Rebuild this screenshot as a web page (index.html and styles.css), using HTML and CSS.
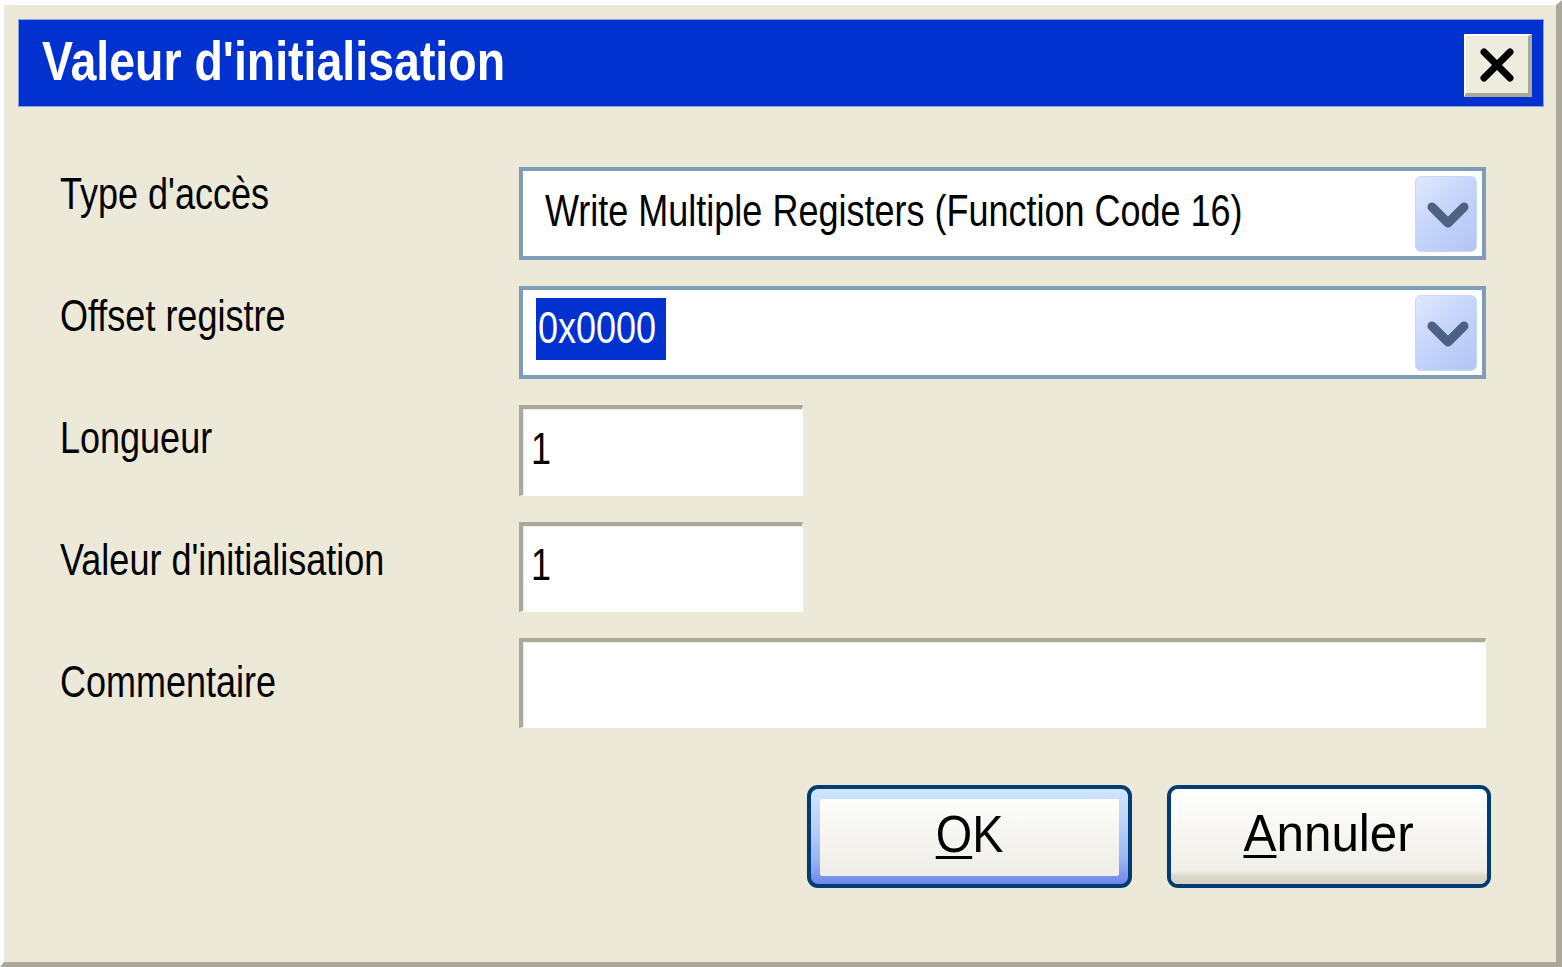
FILE: index.html
```html
<!DOCTYPE html>
<html lang="fr">
<head>
<meta charset="utf-8">
<title>Valeur d'initialisation</title>
<link rel="stylesheet" href="styles.css">
</head>
<body>
<div class="window">
  <div class="titlebar">
    <div class="title"><span class="sx-title">Valeur d'initialisation</span></div>
    <div class="close">
      <svg width="36" height="36" viewBox="0 0 36 36"><path d="M5 5 L31 31 M31 5 L5 31" stroke="#000" stroke-width="7" stroke-linecap="round" fill="none"/></svg>
    </div>
  </div>
  <div class="form">
    <div class="labels">
      <div class="label"><span class="sx">Type d'accès</span></div>
      <div class="label"><span class="sx">Offset registre</span></div>
      <div class="label"><span class="sx">Longueur</span></div>
      <div class="label"><span class="sx">Valeur d'initialisation</span></div>
      <div class="label"><span class="sx">Commentaire</span></div>
    </div>
    <div class="fields">
      <div class="combo">
        <div class="combo-text"><span class="sx">Write Multiple Registers (Function Code 16)</span></div>
        <div class="drop"><svg width="60" height="74" viewBox="0 0 60 74"><path d="M16 30 L32 46 L48 30" stroke="#4d6185" stroke-width="9" stroke-linecap="round" stroke-linejoin="round" fill="none"/></svg></div>
      </div>
      <div class="combo">
        <div class="combo-text edit"><div class="sel"><span class="sx">0x0000</span></div></div>
        <div class="drop"><svg width="60" height="74" viewBox="0 0 60 74"><path d="M16 30 L32 46 L48 30" stroke="#4d6185" stroke-width="9" stroke-linecap="round" stroke-linejoin="round" fill="none"/></svg></div>
      </div>
      <div class="input short h91"><span class="sx">1</span></div>
      <div class="input short"><span class="sx">1</span></div>
      <div class="input long"></div>
    </div>
  </div>
  <div class="buttons">
    <div class="btn default"><div class="face"><span class="sxb"><u>O</u>K</span></div></div>
    <div class="btn"><div class="face"><span class="sxb wide"><u>A</u>nnuler</span></div></div>
  </div>
</div>
</body>
</html>
```
FILE: styles.css
```css
html, body {
  margin: 0;
  padding: 0;
  background: #ece9d8;
  font-family: "Liberation Sans", Arial, sans-serif;
  color: #000;
}

.window {
  width: 1562px;
  height: 967px;
  box-sizing: border-box;
  background: #ece9d8;
  border-top: 5px solid #fff;
  border-left: 4px solid #fff;
  border-right: 6px solid #aca899;
  border-bottom: 5px solid #aca899;
  padding: 14px 12px 0 14px;
}

.titlebar {
  height: 88px;
  box-sizing: border-box;
  border: 1px solid #8d9fdc;
  background: #0131cf;
  display: flex;
  justify-content: space-between;
  align-items: flex-start;
  padding: 0 11px 0 23px;
}

.title {
  color: #fff;
  font-weight: bold;
  font-size: 56px;
  line-height: 64px;
  margin-top: 9px;
  white-space: nowrap;
}

.sx-title {
  display: inline-block;
  transform: scaleX(0.83);
  transform-origin: 0 50%;
}

.close {
  width: 68px;
  height: 63px;
  box-sizing: border-box;
  margin-top: 14px;
  background: #eeebdf;
  border-top: 2px solid #fff;
  border-left: 2px solid #fff;
  border-right: 4px solid #aca899;
  border-bottom: 4px solid #aca899;
  display: flex;
  align-items: center;
  justify-content: center;
}

.close svg { display: block; }

.form {
  display: flex;
  margin-top: 60px;
  padding-left: 42px;
}

.labels {
  width: 459px;
  padding-top: 2px;
  display: flex;
  flex-direction: column;
  gap: 72px;
}

.label {
  font-size: 45px;
  line-height: 50px;
  white-space: nowrap;
}

.sx {
  display: inline-block;
  white-space: nowrap;
  transform: scaleX(0.8);
  transform-origin: 0 50%;
}

.fields {
  width: 967px;
  display: flex;
  flex-direction: column;
  gap: 26px;
}

.combo {
  height: 93px;
  box-sizing: border-box;
  border: 4px solid #7f9db9;
  background: #fff;
  display: flex;
  align-items: center;
}

.combo-text {
  flex: 1;
  font-size: 45px;
  line-height: 52px;
  padding-left: 22px;
  padding-bottom: 5px;
  white-space: nowrap;
  overflow: hidden;
}

.combo-text.edit {
  padding-left: 13px;
  padding-bottom: 8px;
  display: flex;
  align-items: center;
}

.sel {
  width: 130px;
  height: 62px;
  box-sizing: border-box;
  padding-left: 2px;
  padding-bottom: 2px;
  background: #0131cf;
  color: #fff;
  display: flex;
  align-items: center;
}

.drop {
  width: 62px;
  height: 76px;
  box-sizing: border-box;
  margin-right: 5px;
  border-radius: 6px;
  border: 1px solid #c9d7fb;
  background: linear-gradient(135deg, #e1e9fe 0%, #c6d5fb 45%, #b2c5f3 100%);
}

.drop svg { display: block; }

.input {
  box-sizing: border-box;
  height: 90px;
  background: #fff;
  border-top: 4px solid #aca899;
  border-left: 4px solid #aca899;
  border-right: 1px solid #fff;
  border-bottom: 1px solid #fff;
  box-shadow: inset 1px 1px 0 #f1efe2;
  display: flex;
  align-items: center;
  padding-left: 8px;
  padding-bottom: 7px;
  font-size: 45px;
  line-height: 52px;
}

.input.short { width: 284px; }
.input.h91 { height: 91px; }
.input.long { width: 967px; }

.buttons {
  display: flex;
  justify-content: flex-end;
  gap: 35px;
  margin-top: 57px;
  padding-right: 53px;
}

.btn {
  width: 325px;
  height: 103px;
  box-sizing: border-box;
  border: 4px solid #003c74;
  border-radius: 11px;
  display: flex;
  background: #f3f2ec;
}

.btn + .btn { width: 324px; }

.btn .face {
  flex: 1;
  display: flex;
  align-items: center;
  justify-content: center;
  border-radius: 7px;
  padding-bottom: 8px;
  background: linear-gradient(#ffffff 0%, #f7f6f2 45%, #efeee8 86%, #dcd7cb 92%, #d6d0c5 100%);
  font-size: 52px;
  line-height: 60px;
}

.btn.default {
  padding: 10px 9px 8px 9px;
  background: linear-gradient(#cfe6ff 0%, #bcd3fb 35%, #97b5f3 75%, #6c86ec 100%);
}

.btn.default .face {
  border-radius: 2px;
  padding-bottom: 8px;
  background: linear-gradient(#fdfdfb 0%, #f4f3ee 60%, #eeede6 100%);
}

.sxb {
  display: inline-block;
  white-space: nowrap;
  transform: scaleX(0.9);
  transform-origin: 50% 50%;
}

.sxb.wide { transform: scaleX(0.95); }

.sxb u {
  text-decoration-thickness: 3px;
  text-underline-offset: 4px;
}
```
